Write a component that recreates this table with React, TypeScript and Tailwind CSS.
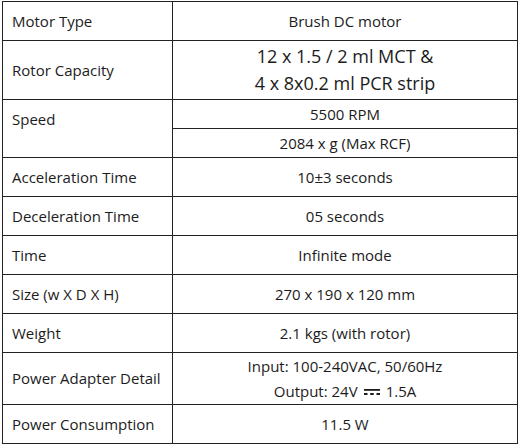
const rows: { label: string; value: React.ReactNode; h: string }[] = [
  { label: "Acceleration Time", value: "10±3 seconds", h: "h-[39px]" },
  { label: "Deceleration Time", value: "05 seconds", h: "h-[39px]" },
  { label: "Time", value: "Infinite mode", h: "h-[39px]" },
  { label: "Size (w X D X H)", value: "270 x 190 x 120 mm", h: "h-[39px]" },
  { label: "Weight", value: "2.1 kgs (with rotor)", h: "h-[39px]" },
];

const cell = "border border-[#222] text-[15px] text-[#1c1c1c]";
const labelCell = `${cell} w-[170px] pl-[9px] text-left align-middle`;
const valueCell = `${cell} text-center align-middle`;

const DcSymbol = () => (
  <svg width="16" height="8" viewBox="0 0 16 8" className="inline-block mx-[6px] align-middle">
    <rect x="0" y="1" width="16" height="1.8" fill="#1c1c1c" />
    <rect x="0" y="5" width="3.5" height="2" fill="#1c1c1c" />
    <rect x="6.2" y="5" width="3.5" height="2" fill="#1c1c1c" />
    <rect x="12.5" y="5" width="3.5" height="2" fill="#1c1c1c" />
  </svg>
);

export default function App() {
  return (
    <div className="w-[521px] h-[448px] bg-white pt-[1px] pl-[2px]" style={{ fontFamily: '"Open Sans", "Noto Sans", sans-serif' }}>
      <table className="border-collapse w-[516px] table-fixed">
        <tbody>
          <tr className="h-[39px]">
            <td className={labelCell}>Motor Type</td>
            <td className={valueCell}>Brush DC motor</td>
          </tr>
          <tr className="h-[59px]">
            <td className={labelCell}>Rotor Capacity</td>
            <td className={`${valueCell} text-[18px] leading-[27px]`}>
              12 x 1.5 / 2 ml MCT &amp;
              <br />4 x 8x0.2 ml PCR strip
            </td>
          </tr>
          <tr className="h-[29px]">
            <td rowSpan={2} className={`${cell} pl-[9px] align-top pt-[8px]`}>
              Speed
            </td>
            <td className={valueCell}>5500 RPM</td>
          </tr>
          <tr className="h-[29px]">
            <td className={valueCell}>2084 x g (Max RCF)</td>
          </tr>
          {rows.map((r) => (
            <tr key={r.label} className={r.h}>
              <td className={labelCell}>{r.label}</td>
              <td className={valueCell}>{r.value}</td>
            </tr>
          ))}
          <tr className="h-[52px]">
            <td className={labelCell}>Power Adapter Detail</td>
            <td className={`${valueCell} leading-[25px]`}>
              Input: 100-240VAC, 50/60Hz
              <br />
              Output: 24V
              <DcSymbol />
              1.5A
            </td>
          </tr>
          <tr className="h-[39px]">
            <td className={labelCell}>Power Consumption</td>
            <td className={valueCell}>11.5 W</td>
          </tr>
        </tbody>
      </table>
    </div>
  );
}
